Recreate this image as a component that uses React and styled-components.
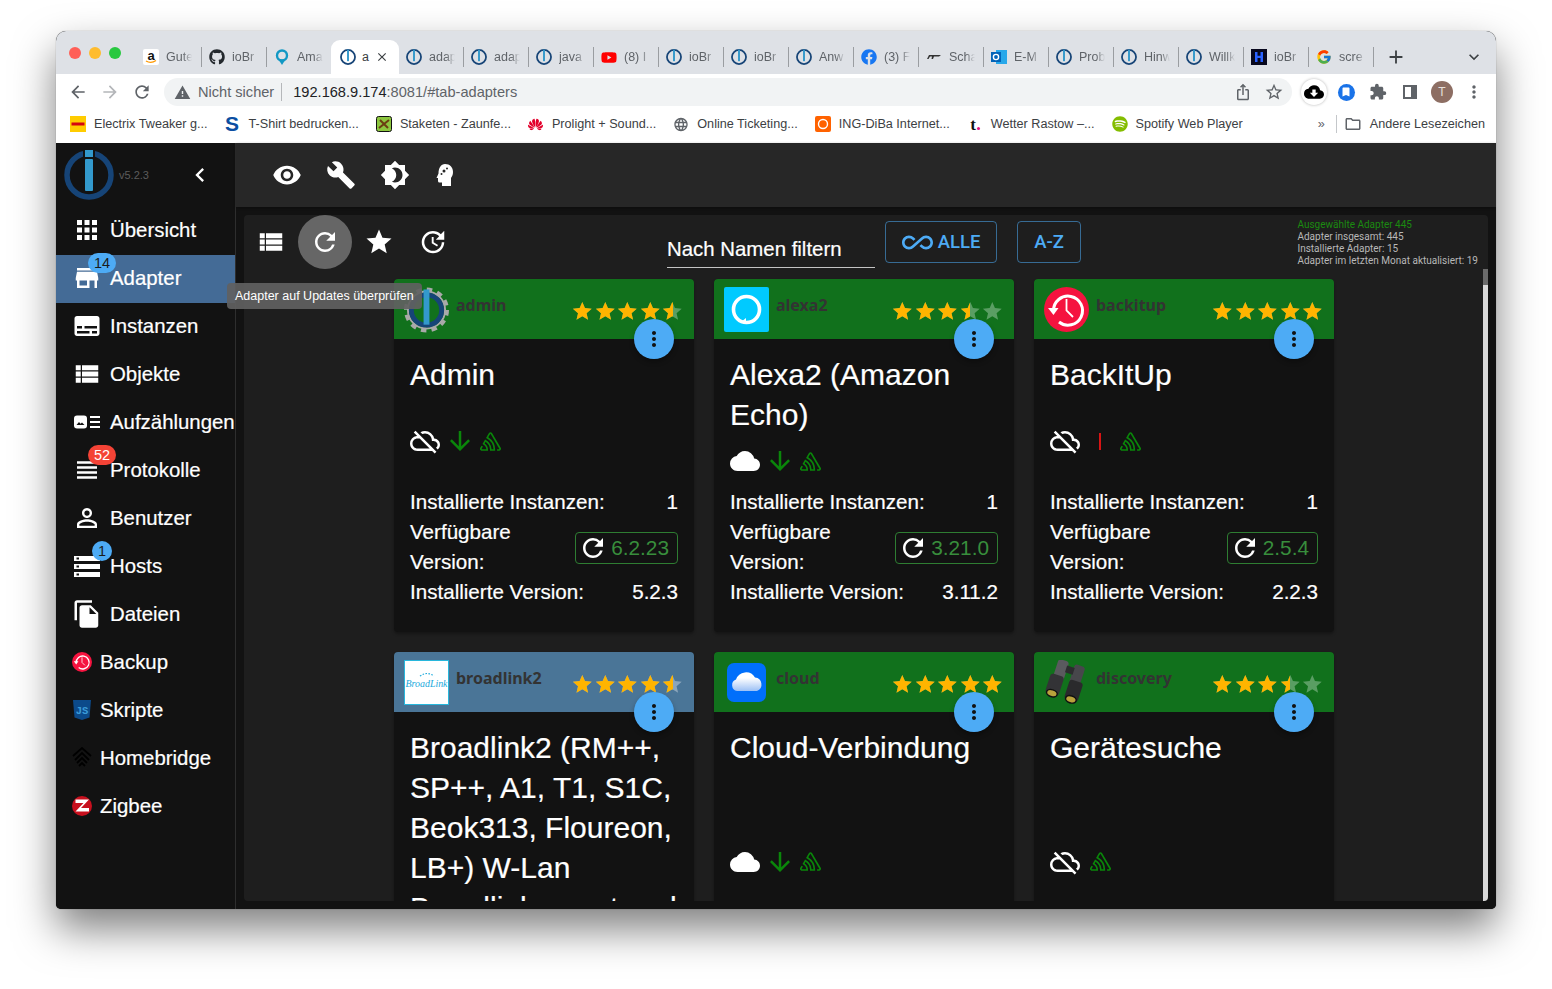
import React from 'react';
import styled, {createGlobalStyle} from 'styled-components';
import {
  MdApps, MdStore, MdSubtitles, MdViewList, MdViewHeadline, MdPersonOutline, MdFileCopy,
  MdChevronLeft, MdVisibility, MdBuild, MdBrightness4, MdRefresh, MdStar, MdUpdate,
  MdAllInclusive, MdMoreVert, MdOutlineCloudOff, MdCloud, MdCloudDownload, MdArrowDownward,
  MdArrowBack, MdArrowForward, MdWarning, MdOutlineStarBorder, MdExtension,
  MdAdd, MdExpandMore, MdClose, MdOutlineFolder, MdLanguage, MdIosShare, MdBookmark,
} from 'react-icons/md';
import {FaGithub, FaFacebook, FaYoutube, FaSpotify} from 'react-icons/fa';
import {FcGoogle} from 'react-icons/fc';
import {SiSentry, SiHuawei} from 'react-icons/si';

const GlobalStyle = createGlobalStyle`
  html, body { margin: 0; padding: 0; background: #fff; }
  body { font-family: "Liberation Sans", Arial, sans-serif; overflow: hidden; }
  * { box-sizing: border-box; }
`;

const Page = styled.div`
  width: 1552px;
  height: 989px;
  padding: 31px 56px 80px;
`;

const Win = styled.div`
  height: 878px;
  display: flex;
  flex-direction: column;
  border-radius: 10px 10px 5px 5px;
  overflow: hidden;
  background: #121212;
  box-shadow: 0 20px 42px rgba(0, 0, 0, 0.5), 0 0 1px rgba(0, 0, 0, 0.5);
`;

/* browser chrome */
const TabStrip = styled.div`
  height: 43px;
  flex: none;
  display: flex;
  background: #dee1e6;
  padding: 9px 0 0 13px;
`;

const Lights = styled.div`
  display: flex;
  gap: 8px;
  padding-top: 7px;
  width: 67px;
`;

const Light = styled.span`
  width: 12px;
  height: 12px;
  border-radius: 50%;
  background: ${p => p.$c};
`;

const Tab = styled.div`
  width: ${p => p.$first ? '66px' : '65px'};
  height: 20px;
  margin-top: 7px;
  display: flex;
  align-items: center;
  gap: 7px;
  padding-left: 7px;
  font-size: 12.5px;
  color: #5f6368;
  border-right: ${p => p.$plain ? '0' : '1px solid #9a9da1'};
`;

const ActiveTab = styled.div`
  width: 68px;
  height: 34px;
  margin-left: -1px;
  display: flex;
  align-items: center;
  gap: 6px;
  padding-left: 9px;
  font-size: 12.5px;
  color: #3c4043;
  background: #fff;
  border-radius: 9px 9px 0 0;
`;

const TabIcon = styled.span`
  width: 16px;
  height: 16px;
  flex: none;
  display: flex;
  align-items: center;
  justify-content: center;
`;

const TabLabel = styled.span`
  width: 26px;
  white-space: nowrap;
  -webkit-mask-image: linear-gradient(90deg, #000 65%, transparent 100%);
  mask-image: linear-gradient(90deg, #000 65%, transparent 100%);
`;

const ActiveLabel = styled.span`
  width: 7px;
`;

const StripEnd = styled.div`
  flex: 1;
  display: flex;
  align-items: center;
  height: 20px;
  margin-top: 7px;
  padding: 0 12px 0 11px;
  justify-content: space-between;
  color: #3c4043;
`;

const AddressBar = styled.div`
  height: 36px;
  flex: none;
  background: #fff;
  display: flex;
  align-items: center;
  padding: 0 12px;
  color: #5f6368;
`;

const NavBtn = styled.span`
  width: 20px;
  height: 20px;
  margin-right: 12px;
  display: flex;
  align-items: center;
  justify-content: center;
  color: ${p => p.$off ? '#b4b6b9' : '#5f6368'};
`;

const Pill = styled.div`
  width: 1128px;
  height: 28px;
  border-radius: 14px;
  background: #f1f3f4;
  display: flex;
  align-items: center;
  padding: 0 8px 0 10px;
  font-size: 14.6px;
  white-space: nowrap;
`;

const Secure = styled.span`
  display: flex;
  align-items: center;
  gap: 7px;
  padding-right: 7px;
  border-right: 1px solid #b5b7ba;
  height: 18px;
  margin-right: 11px;
`;

const Host = styled.span`
  color: #202124;
`;

const PillEnd = styled.span`
  margin-left: auto;
  display: flex;
  align-items: center;
  gap: 12px;
`;

const ExtRow = styled.div`
  display: flex;
  align-items: center;
  margin-left: 12px;
  gap: 12px;
`;

const ExtBtn = styled.span`
  width: 20px;
  height: 20px;
  display: flex;
  align-items: center;
  justify-content: center;
  color: #5f6368;
`;

const CloudExt = styled.span`
  width: 26px;
  height: 26px;
  margin: 0 -3px;
  border-radius: 50%;
  background: #fff;
  box-shadow: 0 0 3px rgba(0, 0, 0, 0.3);
  display: flex;
  align-items: center;
  justify-content: center;
`;

const BlueDot = styled.span`
  width: 17px;
  height: 17px;
  border-radius: 50%;
  background: #1a73e8;
  color: #fff;
  display: flex;
  align-items: center;
  justify-content: center;
`;

const Avatar = styled.span`
  width: 22px;
  height: 22px;
  flex: none;
  border-radius: 50%;
  background: #8d6e63;
  color: #e8e0dc;
  font-size: 12px;
  display: flex;
  align-items: center;
  justify-content: center;
`;

const Bookmarks = styled.div`
  height: 33px;
  flex: none;
  background: #fff;
  display: flex;
  align-items: center;
  gap: 17px;
  padding: 0 11px 5px 14px;
  font-size: 12.65px;
  color: #3c4043;
  white-space: nowrap;
`;

const Mark = styled.span`
  display: flex;
  align-items: center;
  gap: 8px;
`;

const MarkIcon = styled.span`
  width: 16px;
  height: 16px;
  display: flex;
  align-items: center;
  justify-content: center;
  flex: none;
`;

const BookmarkEnd = styled.span`
  margin-left: auto;
  display: flex;
  align-items: center;
  gap: 8px;
  color: #5f6368;
`;

const OtherMarks = styled.span`
  color: #3c4043;
`;

const Divider = styled.span`
  width: 1px;
  height: 18px;
  background: #c4c7ca;
  margin: 0 -1px 0 3px;
`;

/* app frame */
const Shell = styled.div`
  flex: 1;
  min-height: 0;
  display: flex;
  position: relative;
  color: #fff;
`;

const Sidebar = styled.nav`
  width: 180px;
  flex: none;
  background: #121212;
  border-right: 1px solid #2e2e2e;
`;

const Brand = styled.div`
  height: 64px;
  display: flex;
  align-items: center;
  padding: 0 0 0 8px;
`;

const Version = styled.span`
  font-size: 11px;
  color: #5c5c5c;
  margin: 0 39px 0 5px;
  width: 28px;
`;

const NavItem = styled.div`
  height: 48px;
  display: flex;
  align-items: center;
  position: relative;
  padding: 0 0 2px 16px;
  font-size: 20.4px;
  -webkit-text-stroke: 0.2px #fff;
  white-space: nowrap;
  background: ${p => p.$active ? '#446b96' : 'transparent'};
`;

const NavIcon = styled.span`
  width: ${p => p.$small ? '20px' : '30px'};
  margin-right: 8px;
  flex: none;
  display: flex;
  align-items: center;
  justify-content: center;
  color: #fff;
  -webkit-text-stroke: 0;
`;

const Badge = styled.span`
  position: absolute;
  left: ${p => p.$round ? '36px' : '32px'};
  top: -2px;
  min-width: ${p => p.$round ? '20px' : '28px'};
  height: 20px;
  border-radius: 10px;
  background: ${p => p.$c};
  color: ${p => p.$dark ? '#1b1b1b' : '#fff'};
  font-size: 14.5px;
  -webkit-text-stroke: 0;
  display: flex;
  align-items: center;
  justify-content: center;
`;

const Main = styled.main`
  flex: 1;
  min-width: 0;
  display: flex;
  flex-direction: column;
  background: #121212;
`;

const TopBar = styled.div`
  height: 64px;
  flex: none;
  background: #272727;
  display: flex;
  align-items: center;
  padding-left: 24px;
  box-shadow: 0 1px 3px rgba(0, 0, 0, 0.3);
`;

const IconBtn = styled.span`
  width: 54px;
  height: 54px;
  flex: none;
  border-radius: 50%;
  display: flex;
  align-items: center;
  justify-content: center;
  color: #fff;
  background: ${p => p.$hover ? '#666' : 'transparent'};
`;

const Panel = styled.section`
  flex: 1;
  min-height: 0;
  margin: 8px;
  border-radius: 4px;
  background: #1e1e1e;
  display: flex;
  flex-direction: column;
  overflow: hidden;
`;

const PanelBar = styled.div`
  height: 54px;
  flex: none;
  display: flex;
  align-items: flex-start;
`;

const FilterBox = styled.div`
  width: 208px;
  height: 45px;
  margin: 8px 0 0 207px;
  padding-top: 14px;
  font-size: 20.4px;
  line-height: 24px;
  -webkit-text-stroke: 0.2px #fff;
  border-bottom: 1px solid #c4c4c4;
`;

const OutlineBtn = styled.span`
  height: 42px;
  margin: 6px 0 0 ${p => p.$ml}px;
  width: ${p => p.$w}px;
  border: 1px solid rgba(77, 171, 245, 0.55);
  border-radius: 4px;
  display: flex;
  align-items: center;
  justify-content: center;
  gap: 5px;
  color: #4dabf5;
  font-family: Roboto, sans-serif;
  font-weight: 500;
  font-size: 18.5px;
`;

const Stats = styled.div`
  margin: 0 10px 0 auto;
  padding-top: 4px;
  font-family: Roboto, sans-serif;
  font-size: 10px;
  line-height: 12px;
  color: #b8b8b8;
  white-space: nowrap;
`;

const Selected = styled.div`
  color: #1b8a10;
`;

const Tip = styled.div`
  position: absolute;
  left: 171px;
  top: 140px;
  height: 26px;
  width: 195px;
  padding-left: 8px;
  border-radius: 4px;
  background: rgba(97, 97, 97, 0.92);
  color: #fff;
  font-size: 12.5px;
  line-height: 26px;
  white-space: nowrap;
  z-index: 5;
`;

const ScrollArea = styled.div`
  flex: 1;
  min-height: 0;
  display: flex;
`;

const CardGrid = styled.div`
  flex: 1;
  min-width: 0;
  overflow: hidden;
  padding: 10px 0 0 150px;
  display: grid;
  grid-template-columns: repeat(3, 300px);
  grid-auto-rows: max-content;
  gap: 20px;
`;

const Track = styled.div`
  width: 5px;
  flex: none;
  background: #d8d8d8;
`;

const Thumb = styled.div`
  height: 16px;
  background: #6b6b6b;
`;

const Card = styled.article`
  position: relative;
  height: ${p => p.$h}px;
  display: flex;
  flex-direction: column;
  background: #121212;
  border-radius: 4px;
  box-shadow: 0 2px 3px rgba(0, 0, 0, 0.3);
`;

const CardHead = styled.header`
  height: 60px;
  flex: none;
  border-radius: 4px 4px 0 0;
  background: ${p => p.$bg};
  display: flex;
  padding: 8px 10px 0 10px;
`;

const Logo = styled.span`
  width: 45px;
  height: 45px;
  flex: none;
  display: flex;
  align-items: center;
  justify-content: center;
`;

const Slug = styled.span`
  margin: 8px 0 0 7px;
  font-family: "Noto Sans", sans-serif;
  font-weight: 700;
  font-size: 16px;
  line-height: 20px;
  color: #333;
`;

const Stars = styled.span`
  margin: 13px 0 0 auto;
  display: flex;
`;

const StarBox = styled.span`
  position: relative;
  width: 22.6px;
  height: 22.6px;
  color: ${p => p.$empty};
`;

const StarFill = styled.span`
  position: absolute;
  left: 0;
  top: 0;
  height: 100%;
  overflow: hidden;
  color: #ffb400;
`;

const Fab = styled.span`
  position: absolute;
  right: 20px;
  top: 40px;
  width: 40px;
  height: 40px;
  border-radius: 50%;
  background: #4dabf5;
  color: #121212;
  display: flex;
  align-items: center;
  justify-content: center;
  box-shadow: 0 3px 5px rgba(0, 0, 0, 0.3);
`;

const CardBody = styled.div`
  flex: 1;
  min-height: 0;
  display: flex;
  flex-direction: column;
  padding: 16px 16px 25px;
`;

const Title = styled.h2`
  margin: 0;
  font-weight: 400;
  font-size: 30px;
  line-height: 40px;
  -webkit-text-stroke: 0.2px #fff;
`;

const Flags = styled.div`
  height: 24px;
  margin: auto 0;
  display: flex;
  align-items: center;
  gap: 5px;
  color: #fff;
`;

const Green = styled.span`
  display: flex;
  margin-left: ${p => p.$ml || 0}px;
  color: #0a860a;
  stroke: currentColor;
  stroke-width: ${p => p.$thick ? '0.6px' : '0'};
`;

const RedBar = styled.span`
  width: 2px;
  height: 17px;
  margin: 0 14px;
  background: #d81414;
`;

const Info = styled.div`
  font-size: 20.6px;
  line-height: 30px;
  -webkit-text-stroke: 0.2px #fff;
`;

const InfoRow = styled.div`
  display: flex;
  align-items: center;
  justify-content: space-between;
`;

const UpdateBtn = styled.span`
  height: 32px;
  flex: none;
  margin: 2px 0 0 8px;
  padding: 0 8px 0 2px;
  display: flex;
  align-items: center;
  gap: 3px;
  border: 1px solid #2e7d32;
  border-radius: 4px;
  color: #388e3c;
  font-size: 20.8px;
  -webkit-text-stroke: 0;
`;

const WhiteIcon = styled.span`
  display: flex;
  color: #fff;
`;

/* drawings */
const IoLogo = () => (
  <svg width="16" height="16" viewBox="0 0 50 50">
    <circle cx="25" cy="25" r="22" fill="none" stroke="#164477" strokeWidth="5.5"/>
    <rect x="22" y="2" width="6" height="36" fill="#3399cc"/>
  </svg>
);

const AdminLogo = () => (
  <svg width="46" height="46" viewBox="0 0 46 46">
    <circle cx="23" cy="23" r="20.5" fill="none" stroke="#a9a9a9" strokeWidth="5" strokeDasharray="5.5 5.2"/>
    <circle cx="23" cy="23" r="19" fill="none" stroke="#a9a9a9" strokeWidth="2"/>
    <circle cx="23" cy="23" r="15.5" fill="none" stroke="#164477" strokeWidth="5"/>
    <rect x="20" y="2" width="6" height="36" fill="#3399cc"/>
  </svg>
);

const SidebarLogo = () => (
  <svg width="50" height="50" viewBox="0 0 50 50">
    <circle cx="25" cy="25" r="22" fill="none" stroke="#164477" strokeWidth="5.5"/>
    <rect x="19" y="0" width="12" height="42" fill="#121212"/>
    <rect x="21" y="0" width="8" height="7" fill="#3399cc"/>
    <rect x="21" y="9" width="8" height="32" rx="1" fill="#3399cc"/>
  </svg>
);

const RedClock = ({size}) => (
  <svg width={size} height={size} viewBox="0 0 45 45">
    <circle cx="22.5" cy="22.5" r="22.5" fill="#f5133f"/>
    <path d="M9.5 24 A14.5 14.5 0 1 1 15 35" fill="none" stroke="#fff" strokeWidth="3"/>
    <path d="M4 21 L14.5 21 L9.5 28 Z" fill="#fff"/>
    <path d="M22.5 12 V23.5 L29 30" fill="none" stroke="#fff" strokeWidth="1.8"/>
  </svg>
);

const AlexaLogo = () => (
  <svg width="45" height="45" viewBox="0 0 45 45">
    <rect width="45" height="45" rx="2" fill="#00caff"/>
    <circle cx="22.5" cy="22.5" r="13" fill="none" stroke="#fff" strokeWidth="3.6"/>
    <path d="M17 35 L22 31 L22 37 Z" fill="#fff"/>
  </svg>
);

const BroadlinkLogo = () => (
  <svg width="45" height="45" viewBox="0 0 45 45" overflow="visible">
    <rect x="0.5" y="0.5" width="44" height="44" fill="#fff" stroke="#28b7dc"/>
    <text x="1.5" y="27" fontFamily="Liberation Serif, serif" fontSize="11" fontStyle="italic" fill="#19a9dc" textLength="42" lengthAdjust="spacingAndGlyphs">BroadLink</text>
    <path d="M16 16 Q23 11 30 16" fill="none" stroke="#19a9dc" strokeWidth="1.2" strokeDasharray="1.5 1.5"/>
  </svg>
);

const CloudLogo = () => (
  <svg width="39" height="39" viewBox="0 0 39 39">
    <defs>
      <linearGradient id="cloudFade" x1="0" y1="0" x2="0" y2="1">
        <stop offset="0.3" stopColor="#fff"/>
        <stop offset="1" stopColor="#9cc0f5"/>
      </linearGradient>
    </defs>
    <rect width="39" height="39" rx="7" fill="#006ffb"/>
    <path d="M10 28 A6 6 0 0 1 9 16.5 A10.5 10.5 0 0 1 28 14.5 A7 7 0 0 1 30 28 Z" fill="url(#cloudFade)"/>
  </svg>
);

const Binoculars = () => (
  <svg width="45" height="45" viewBox="0 0 45 45">
    <g transform="rotate(18 22 22)">
      <rect x="8" y="2" width="11" height="20" rx="3" fill="#5a5a5e"/>
      <rect x="25" y="2" width="11" height="20" rx="3" fill="#47474b"/>
      <rect x="18" y="6" width="8" height="7" fill="#2c2c2e"/>
      <rect x="5" y="18" width="14" height="20" rx="3" fill="#333336"/>
      <rect x="25" y="18" width="14" height="20" rx="3" fill="#2a2a2c"/>
      <ellipse cx="12" cy="37" rx="5.5" ry="3.5" fill="#b9a23c" stroke="#111" strokeWidth="1.5"/>
      <ellipse cx="32" cy="37" rx="5.5" ry="3.5" fill="#b9a23c" stroke="#111" strokeWidth="1.5"/>
    </g>
  </svg>
);

const EnumIcon = () => (
  <svg width="26" height="14" viewBox="0 0 26 14">
    <rect x="0" y="0.5" width="13" height="13" rx="3" fill="#fff"/>
    <path d="M2.5 10 L5 7 L6.5 8.8 L8 7.5 L10.5 10 Z" fill="#121212"/>
    <rect x="16" y="1" width="10" height="2" fill="#fff"/>
    <rect x="16" y="6" width="10" height="2" fill="#fff"/>
    <rect x="16" y="11" width="10" height="2" fill="#fff"/>
  </svg>
);

const HostsIcon = () => (
  <svg width="26" height="21" viewBox="0 0 26 21">
    {[0, 8, 16].map(y => (
      <g key={y}>
        <rect x="0" y={y} width="26" height="5" fill="#fff"/>
        <rect x="2.5" y={y + 1.5} width="2.5" height="2" fill="#121212"/>
      </g>
    ))}
  </svg>
);

const JsShield = () => (
  <svg width="20" height="22" viewBox="0 0 20 22">
    <path d="M1 1 H19 L17.5 18.5 L10 21 L2.5 18.5 Z" fill="#0c4a8a"/>
    <text x="10" y="14.5" textAnchor="middle" fontFamily="Liberation Mono, monospace" fontWeight="700" fontSize="10.5" fill="#3a9bd8">JS</text>
  </svg>
);

const HomebridgeIcon = () => (
  <svg width="20" height="22" viewBox="0 0 20 22" fill="none" stroke="#000" strokeWidth="1.8">
    <path d="M1 9 L10 1 L19 9"/>
    <path d="M3 13 L10 6 L17 13"/>
    <path d="M5 16 L10 11 L15 16"/>
    <path d="M7 19 L10 16 L13 19"/>
  </svg>
);

const ZigbeeIcon = () => (
  <svg width="20" height="20" viewBox="0 0 20 20">
    <circle cx="10" cy="10" r="10" fill="#c8101e"/>
    <path d="M3.5 3.5 H17 L9 12 H17 V15.5 H3.5 L11.5 7 H3.5 Z" fill="#fff"/>
  </svg>
);

const HeadIcon = () => (
  <svg width="26" height="24" viewBox="0 0 26 24">
    <path d="M9 1 C14 1 17 4.5 17 9 C17 12 16 13.5 15 15 V23 H6 V19.5 H3.5 C2.5 19.5 2 18.8 2 18 V15 H0.5 L2.5 10.5 C2.5 5 5 1 9 1 Z" fill="#fff"/>
    <circle cx="8" cy="8" r="1.5" fill="#272727"/>
    <circle cx="5.5" cy="11" r="1" fill="#272727"/>
    <circle cx="11" cy="5.5" r="1" fill="#272727"/>
  </svg>
);

const DhlIcon = () => (
  <svg width="16" height="16" viewBox="0 0 16 16">
    <rect width="16" height="16" fill="#ffcc00"/>
    <rect x="1.5" y="6.5" width="13" height="3" fill="#d40511"/>
  </svg>
);

const SpreadIcon = () => (
  <svg width="16" height="18" viewBox="0 0 16 18" overflow="visible">
    <text x="7" y="16" textAnchor="middle" fontWeight="700" fontSize="21" fontFamily="Liberation Sans, sans-serif" fill="#0b4ea2">S</text>
  </svg>
);

const WetterIcon = () => (
  <svg width="16" height="16" viewBox="0 0 16 16" overflow="visible">
    <text x="6" y="14" textAnchor="middle" fontWeight="700" fontSize="17" fontFamily="Liberation Serif, serif" fill="#111">t</text>
    <circle cx="11.5" cy="12.5" r="1.5" fill="#e5127d"/>
  </svg>
);

const StaketenIcon = () => (
  <svg width="16" height="16" viewBox="0 0 16 16">
    <rect x="0.5" y="0.5" width="15" height="15" rx="2" fill="#8cc63f" stroke="#111"/>
    <path d="M3 12 L13 4 M4 4 L12 12" stroke="#6b3d12" strokeWidth="2"/>
  </svg>
);

const FitIcon = () => (
  <svg width="16" height="16" viewBox="0 0 16 16">
    <path d="M1 10 L3 6 H15 L13 7.5 H8 L7 10 H5.5 L6 7.5 H4 L2.5 10 Z" fill="#333"/>
  </svg>
);

const OutlookIcon = () => (
  <svg width="16" height="16" viewBox="0 0 16 16">
    <rect x="5" y="1" width="11" height="14" fill="#28a8ea"/>
    <rect x="0" y="3" width="10" height="10" fill="#0364b8"/>
    <circle cx="5" cy="8" r="2.6" fill="none" stroke="#fff" strokeWidth="1.4"/>
  </svg>
);

const HBox = () => (
  <svg width="16" height="16" viewBox="0 0 16 16">
    <rect width="16" height="16" fill="#08081e"/>
    <path d="M4 3 H6.5 V6.8 H9.5 V3 H12 V13 H9.5 V9 H6.5 V13 H4 Z" fill="#2a62ff"/>
  </svg>
);

const AmazonIcon = () => (
  <svg width="16" height="16" viewBox="0 0 16 16">
    <rect width="16" height="16" rx="2" fill="#fff"/>
    <text x="8" y="10.5" textAnchor="middle" fontFamily="Liberation Sans, sans-serif" fontWeight="700" fontSize="13" fill="#111">a</text>
    <path d="M3 12 Q8 15 13 11.5" fill="none" stroke="#f90" strokeWidth="1.4"/>
  </svg>
);

const MapsPin = () => (
  <svg width="14" height="16" viewBox="0 0 14 16">
    <circle cx="7" cy="6.5" r="5" fill="none" stroke="#1298c4" strokeWidth="2.4"/>
    <path d="M3.5 10.5 L7 16 L10.5 10.5 Z" fill="#1298c4"/>
  </svg>
);

const IngIcon = () => (
  <svg width="16" height="16" viewBox="0 0 16 16">
    <rect width="16" height="16" rx="2" fill="#ff6200"/>
    <circle cx="8" cy="8" r="4.5" fill="none" stroke="#fff" strokeWidth="1.4"/>
  </svg>
);

const PanelIcon = () => (
  <svg width="14" height="14" viewBox="0 0 14 14">
    <rect x="1" y="1" width="12" height="12" fill="none" stroke="#5f6368" strokeWidth="2"/>
    <rect x="8" y="1" width="5" height="12" fill="#5f6368"/>
  </svg>
);

const tabs = [
  {icon: <AmazonIcon/>, label: 'Gute'},
  {icon: <FaGithub size={16} color="#24292e"/>, label: 'ioBr'},
  {icon: <MapsPin/>, label: 'Ama'},
  {icon: <IoLogo/>, label: 'a', active: true},
  {icon: <IoLogo/>, label: 'adap'},
  {icon: <IoLogo/>, label: 'adap'},
  {icon: <IoLogo/>, label: 'java'},
  {icon: <FaYoutube size={17} color="#f00"/>, label: '(8) I'},
  {icon: <IoLogo/>, label: 'ioBr'},
  {icon: <IoLogo/>, label: 'ioBr'},
  {icon: <IoLogo/>, label: 'Anw'},
  {icon: <FaFacebook size={16} color="#1877f2"/>, label: '(3) F'},
  {icon: <FitIcon/>, label: 'Scha'},
  {icon: <OutlookIcon/>, label: 'E-M'},
  {icon: <IoLogo/>, label: 'Prob'},
  {icon: <IoLogo/>, label: 'Hinw'},
  {icon: <IoLogo/>, label: 'Willk'},
  {icon: <HBox/>, label: 'ioBr'},
  {icon: <FcGoogle size={16}/>, label: 'scre'},
];

const marks = [
  {icon: <DhlIcon/>, label: 'Electrix Tweaker g...'},
  {icon: <SpreadIcon/>, label: 'T-Shirt bedrucken...'},
  {icon: <StaketenIcon/>, label: 'Staketen - Zaunfe...'},
  {icon: <SiHuawei size={15} color="#e3002b"/>, label: 'Prolight + Sound...'},
  {icon: <MdLanguage size={17} color="#5f6368"/>, label: 'Online Ticketing...'},
  {icon: <IngIcon/>, label: 'ING-DiBa Internet...'},
  {icon: <WetterIcon/>, label: 'Wetter Rastow –...'},
  {icon: <FaSpotify size={16} color="#84bd00"/>, label: 'Spotify Web Player'},
];

const nav = [
  {icon: <MdApps size={30}/>, label: 'Übersicht'},
  {icon: <MdStore size={30}/>, label: 'Adapter', active: true, badge: '14', c: '#4dabf5', dark: true},
  {icon: <MdSubtitles size={30}/>, label: 'Instanzen'},
  {icon: <MdViewList size={30}/>, label: 'Objekte'},
  {icon: <EnumIcon/>, label: 'Aufzählungen'},
  {icon: <MdViewHeadline size={30}/>, label: 'Protokolle', badge: '52', c: '#f44336'},
  {icon: <MdPersonOutline size={30}/>, label: 'Benutzer'},
  {icon: <HostsIcon/>, label: 'Hosts', badge: '1', c: '#4dabf5', dark: true, round: true},
  {icon: <MdFileCopy size={30}/>, label: 'Dateien'},
  {icon: <RedClock size={20}/>, label: 'Backup', small: true},
  {icon: <JsShield/>, label: 'Skripte', small: true},
  {icon: <HomebridgeIcon/>, label: 'Homebridge', small: true},
  {icon: <ZigbeeIcon/>, label: 'Zigbee', small: true},
];

const cards = [
  {slug: 'admin', logo: <AdminLogo/>, rating: 4.5, title: 'Admin', off: true, arrow: true, inst: '1', avail: '6.2.23', cur: '5.2.3'},
  {slug: 'alexa2', logo: <AlexaLogo/>, rating: 3.5, title: 'Alexa2 (Amazon Echo)', arrow: true, inst: '1', avail: '3.21.0', cur: '3.11.2'},
  {slug: 'backitup', logo: <RedClock size={45}/>, rating: 5, title: 'BackItUp', off: true, red: true, inst: '1', avail: '2.5.4', cur: '2.2.3'},
  {slug: 'broadlink2', logo: <BroadlinkLogo/>, rating: 4.5, bg: '#4a7597', title: 'Broadlink2 (RM++, SP++, A1, T1, S1C, Beok313, Floureon, LB+) W-Lan Broadlink smart und', arrow: true, h: 448},
  {slug: 'cloud', logo: <CloudLogo/>, rating: 5, title: 'Cloud-Verbindung', arrow: true, h: 448},
  {slug: 'discovery', logo: <Binoculars/>, rating: 3.5, title: 'Gerätesuche', off: true, h: 448},
];

const StarRow = ({rating, empty}) => (
  <Stars>
    {[0, 1, 2, 3, 4].map(i => {
      const part = Math.max(0, Math.min(1, rating - i));
      return (
        <StarBox key={i} $empty={empty}>
          <MdStar size={22.6}/>
          <StarFill style={{width: `${part * 100}%`}}>
            <MdStar size={22.6}/>
          </StarFill>
        </StarBox>
      );
    })}
  </Stars>
);

const AdapterCard = ({card}) => (
  <Card $h={card.h || 353}>
    <CardHead $bg={card.bg || '#11711c'}>
      <Logo>{card.logo}</Logo>
      <Slug>{card.slug}</Slug>
      <StarRow rating={card.rating} empty={card.bg ? '#8ba5bb' : '#5a9e63'}/>
    </CardHead>
    <Fab><MdMoreVert size={24}/></Fab>
    <CardBody>
      <Title>{card.title}</Title>
      <Flags>
        {card.off ? <MdOutlineCloudOff size={30}/> : <MdCloud size={30}/>}
        {card.arrow && <Green><MdArrowDownward size={30}/></Green>}
        {card.red && <RedBar/>}
        <Green $thick $ml={!card.arrow && !card.red ? 5 : 0}><SiSentry size={21}/></Green>
      </Flags>
      {card.inst ? (
        <Info>
          <InfoRow><span>Installierte Instanzen:</span><span>{card.inst}</span></InfoRow>
          <InfoRow>
            <span>Verfügbare Version:</span>
            <UpdateBtn><WhiteIcon><MdRefresh size={30}/></WhiteIcon>{card.avail}</UpdateBtn>
          </InfoRow>
          <InfoRow><span>Installierte Version:</span><span>{card.cur}</span></InfoRow>
        </Info>
      ) : (
        <Info>
          <InfoRow>&nbsp;</InfoRow>
          <InfoRow>&nbsp;</InfoRow>
          <InfoRow>&nbsp;</InfoRow>
          <InfoRow>&nbsp;</InfoRow>
        </Info>
      )}
    </CardBody>
  </Card>
);

export default function App() {
  return (
    <Page>
      <GlobalStyle/>
      <Win>
        <TabStrip>
          <Lights>
            <Light $c="#ff5f57"/>
            <Light $c="#febc2e"/>
            <Light $c="#28c840"/>
          </Lights>
          {tabs.map((t, i) => t.active ? (
            <ActiveTab key={i}>
              <TabIcon>{t.icon}</TabIcon>
              <ActiveLabel>{t.label}</ActiveLabel>
              <MdClose size={14}/>
            </ActiveTab>
          ) : (
            <Tab key={i} $first={i === 0} $plain={i === 2}>
              <TabIcon>{t.icon}</TabIcon>
              <TabLabel>{t.label}</TabLabel>
            </Tab>
          ))}
          <StripEnd>
            <MdAdd size={22}/>
            <MdExpandMore size={20}/>
          </StripEnd>
        </TabStrip>

        <AddressBar>
          <NavBtn><MdArrowBack size={20}/></NavBtn>
          <NavBtn $off><MdArrowForward size={20}/></NavBtn>
          <NavBtn><MdRefresh size={20}/></NavBtn>
          <Pill>
            <Secure><MdWarning size={17}/>Nicht sicher</Secure>
            <Host>192.168.9.174</Host>:8081/#tab-adapters
            <PillEnd>
              <MdIosShare size={18}/>
              <MdOutlineStarBorder size={20}/>
            </PillEnd>
          </Pill>
          <ExtRow>
            <CloudExt><MdCloudDownload size={20} color="#000"/></CloudExt>
            <ExtBtn><BlueDot><MdBookmark size={12}/></BlueDot></ExtBtn>
            <ExtBtn><MdExtension size={18}/></ExtBtn>
            <ExtBtn><PanelIcon/></ExtBtn>
            <ExtBtn><Avatar>T</Avatar></ExtBtn>
            <ExtBtn><MdMoreVert size={20}/></ExtBtn>
          </ExtRow>
        </AddressBar>

        <Bookmarks>
          {marks.map(m => (
            <Mark key={m.label}><MarkIcon>{m.icon}</MarkIcon>{m.label}</Mark>
          ))}
          <BookmarkEnd>
            »<Divider/>
            <MdOutlineFolder size={18}/>
            <OtherMarks>Andere Lesezeichen</OtherMarks>
          </BookmarkEnd>
        </Bookmarks>

        <Shell>
          <Sidebar>
            <Brand>
              <SidebarLogo/>
              <Version>v5.2.3</Version>
              <MdChevronLeft size={28}/>
            </Brand>
            {nav.map(n => (
              <NavItem key={n.label} $active={n.active}>
                <NavIcon $small={n.small}>{n.icon}</NavIcon>
                {n.label}
                {n.badge && <Badge $c={n.c} $dark={n.dark} $round={n.round}>{n.badge}</Badge>}
              </NavItem>
            ))}
          </Sidebar>

          <Main>
            <TopBar>
              <IconBtn><MdVisibility size={30}/></IconBtn>
              <IconBtn><MdBuild size={30}/></IconBtn>
              <IconBtn><MdBrightness4 size={30}/></IconBtn>
              <IconBtn><HeadIcon/></IconBtn>
            </TopBar>
            <Panel>
              <PanelBar>
                <IconBtn><MdViewList size={30}/></IconBtn>
                <IconBtn $hover><MdRefresh size={30}/></IconBtn>
                <IconBtn><MdStar size={30}/></IconBtn>
                <IconBtn><MdUpdate size={30}/></IconBtn>
                <FilterBox>Nach Namen filtern</FilterBox>
                <OutlineBtn $ml={10} $w={112}><MdAllInclusive size={31}/>ALLE</OutlineBtn>
                <OutlineBtn $ml={20} $w={64}>A-Z</OutlineBtn>
                <Stats>
                  <Selected>Ausgewählte Adapter 445</Selected>
                  <div>Adapter insgesamt: 445</div>
                  <div>Installierte Adapter: 15</div>
                  <div>Adapter im letzten Monat aktualisiert: 19</div>
                </Stats>
              </PanelBar>
              <ScrollArea>
                <CardGrid>
                  {cards.map(c => <AdapterCard key={c.slug} card={c}/>)}
                </CardGrid>
                <Track><Thumb/></Track>
              </ScrollArea>
            </Panel>
          </Main>
          <Tip>Adapter auf Updates überprüfen</Tip>
        </Shell>
      </Win>
    </Page>
  );
}
